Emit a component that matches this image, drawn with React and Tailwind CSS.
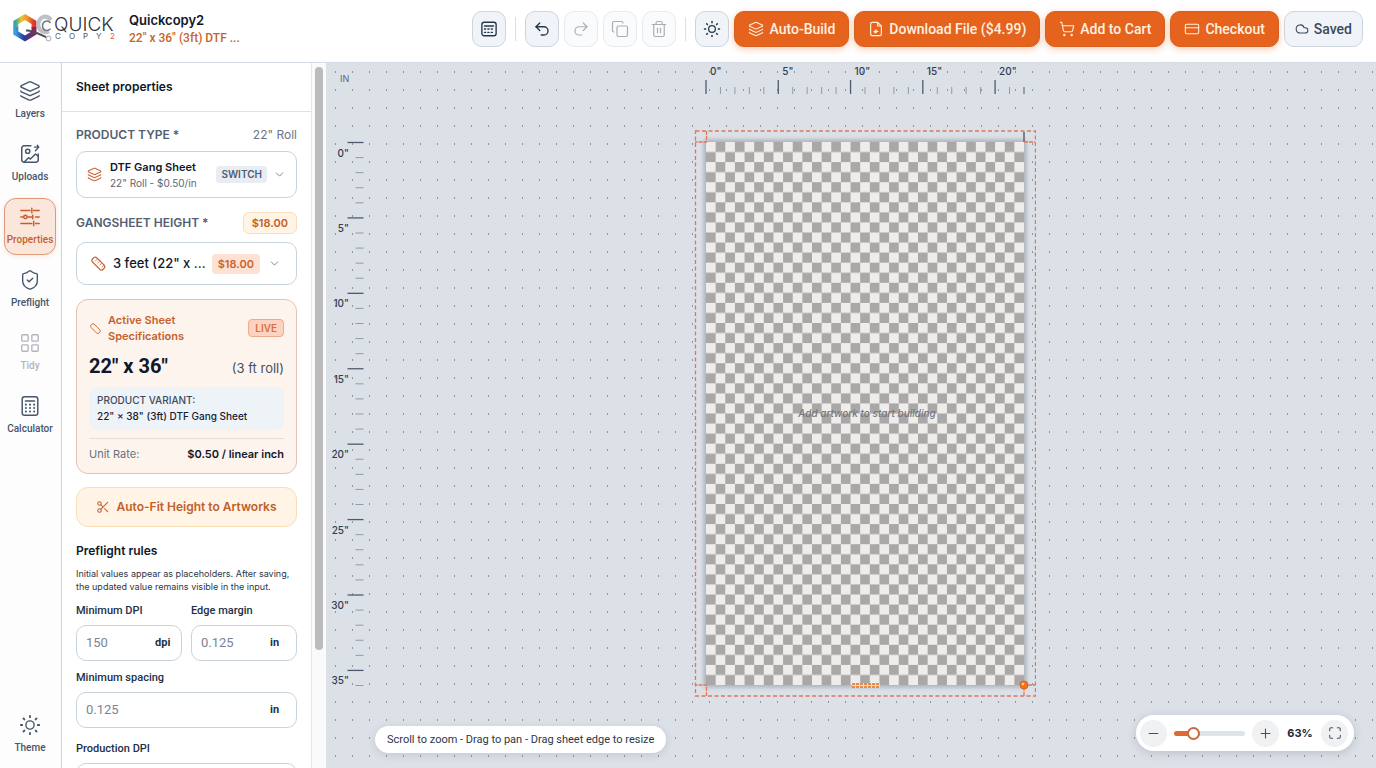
import React, { useState } from "react";
import {
  Layers, ShieldCheck, LayoutGrid, Undo2, Redo2, Copy, Trash2, ShoppingCart,
  CreditCard, Cloud, ChevronDown, Scissors, Minus, Plus, Maximize,
} from "lucide-react";

/* ---------- icons the pack doesn't have ---------- */

const Svg = ({ size = 20, stroke = 1.6, children, className }) => (
  <svg
    width={size}
    height={size}
    viewBox="0 0 24 24"
    fill="none"
    stroke="currentColor"
    strokeWidth={stroke}
    strokeLinecap="round"
    strokeLinejoin="round"
    className={className}
    aria-hidden="true"
  >
    {children}
  </svg>
);

const UploadsIcon = () => (
  <Svg size={22}>
    <path d="M13 3H5.5A2.5 2.5 0 0 0 3 5.5v13A2.5 2.5 0 0 0 5.5 21h13a2.5 2.5 0 0 0 2.5-2.5V12" />
    <circle cx="9.5" cy="9" r="2.3" />
    <path d="M6 20.5 10.5 16l2 1.500L18 12l3 2.500M17 4.500h4.500M20 2.500l1.500 2-3.500 4" />
  </Svg>
);

const SlidersIcon = () => (
  <Svg size={22}>
    <path d="M2 5h10M16 5h6M14 2.500v5M2 12h3M9.500 12H15M18 12h4M15 10v4M2 19h12M18 19h4M16 16.500v5" />
    <circle cx="7" cy="12" r="1.8" />
  </Svg>
);

const CalculatorIcon = () => (
  <Svg size={22}>
    <rect x="3.5" y="2" width="17" height="20" rx="2.5" />
    <path d="M7 6.500h10" />
    <path d="M7.500 10.500h.01M12 10.500h.01M16.500 10.500h.01M7.500 14.200h.01M12 14.200h.01M16.500 14.200h.01M7.500 18h.01M12 18h.01M16.500 18h.01" strokeWidth="2.2" />
  </Svg>
);

const KeypadIcon = () => (
  <Svg size={18} stroke={1.8}>
    <rect x="2.5" y="3" width="19" height="18" rx="3" />
    <path d="M6 8h12" />
    <path d="M6 12h12M6 16.500h12" strokeDasharray="1.5 3" />
  </Svg>
);

const SunIcon = ({ size = 20, stroke = 1.5 }) => (
  <Svg size={size} stroke={stroke}>
    <circle cx="12" cy="12" r="4.5" />
    <path d="M12 2v1.500M12 20.500V22M2 12h1.500M20.500 12H22M4.900 4.900l1 1M18.100 18.100l1 1M4.900 19.100l1-1M18.100 5.900l1-1" strokeWidth="2" />
  </Svg>
);

const FileIcon = () => (
  <Svg size={16} stroke={1.7}>
    <path d="M14.500 2H6a2 2 0 0 0-2 2v16a2 2 0 0 0 2 2h12a2 2 0 0 0 2-2V7.500zM14.500 2v5.500H20" />
    <path d="M9 15.500h6M12 13v4M10 17.500h2.500" />
  </Svg>
);

const RulerIcon = ({ size = 16, ticks = true }) => (
  <Svg size={size} stroke={1.7} className="shrink-0 text-[#cb6a3c]">
    <rect x="1.5" y="8" width="21" height="8.5" rx="3.5" transform="rotate(45 12 12)" />
    {ticks && <path d="m10 6-2 2M13 9l-2 2M16 12l-2 2M19 15l-2 2" strokeWidth="1.3" />}
  </Svg>
);

const Logo = () => (
  <svg width="104" height="32" viewBox="0 0 104 32" role="img" aria-label="Quick Copy 2" className="shrink-0">
    <defs>
      <linearGradient id="hexTop" x1="0" y1="0" x2="1" y2="0">
        <stop offset="0" stopColor="#3aa7a0" />
        <stop offset="0.3" stopColor="#e8c62f" />
        <stop offset="0.65" stopColor="#f0932b" />
        <stop offset="1" stopColor="#d9342b" />
      </linearGradient>
      <linearGradient id="hexBottom" x1="0" y1="0" x2="1" y2="0">
        <stop offset="0" stopColor="#3c9be0" />
        <stop offset="0.45" stopColor="#243c9c" />
        <stop offset="1" stopColor="#8d2462" />
      </linearGradient>
    </defs>
    <path d="M2.800 15V9.500L12 4l9 5.500V15" fill="none" stroke="url(#hexTop)" strokeWidth="5" />
    <path d="M2.800 14v6L12 25.500l9-5.500v-6" fill="none" stroke="url(#hexBottom)" strokeWidth="5" />
    <path d="M38 7C34 1.500 27 3 25.500 10c-1.200 6.500 4.500 11 10.500 8.500" fill="none" stroke="#bfc1c5" strokeWidth="4" />
    <path d="M37.500 10c-2.500-3.500-8-2-8 2.800s5 6 8 3" fill="none" stroke="#74787f" strokeWidth="1.5" />
    <path d="M13 17.500c6-.5 11 2.500 21 7" fill="none" stroke="#4a4d57" strokeWidth="2" />
    <circle cx="35.5" cy="25.5" r="2.3" fill="none" stroke="#b9bcc0" strokeWidth="1.2" />
    <text x="41" y="18" fontSize="19" fontWeight="300" fill="#2d3038">QUICK</text>
    <text x="42" y="26" fontSize="8" fill="#55585f">C</text>
    <text x="56" y="26" fontSize="8" fill="#55585f">O</text>
    <text x="70" y="26" fontSize="8" fill="#55585f">P</text>
    <text x="83" y="26" fontSize="8" fill="#55585f">Y</text>
    <text x="97" y="26" fontSize="8" fill="#e0603c">2</text>
  </svg>
);

/* ---------- header ---------- */

const ToolButton = ({ label, disabled, children }) => (
  <button
    type="button"
    aria-label={label}
    disabled={disabled}
    className="flex h-9 w-[34px] items-center justify-center rounded-[10px] border border-[#ccd5de] bg-[#f0f4f8] text-[#26364a] disabled:border-[#e6ebef] disabled:bg-[#fafbfc] disabled:text-[#a9afb6]"
  >
    {children}
  </button>
);

const ActionButton = ({ icon, children }) => (
  <button
    type="button"
    className="flex h-9 items-center gap-[5px] whitespace-nowrap rounded-[10px] border border-[#d4611f] bg-[#e5631d] px-[13px] font-['Roboto',sans-serif] text-sm font-medium text-[#fff1e2] shadow-[0_2px_7px_rgba(229,99,29,0.35)]"
  >
    {icon}
    {children}
  </button>
);

const Divider = () => <span className="mx-1 h-6 w-px bg-[#d9dfe5]" />;

const Header = () => (
  <header className="flex h-[63px] shrink-0 items-center justify-between border-b border-[#d5dce4] bg-white pb-1 pl-[13px] pr-[13px]">
    <div className="flex items-center gap-3">
      <Logo />
      <div className="leading-[18px]">
        <h1 className="text-[13px] font-semibold text-[#0f172a]">Quickcopy2</h1>
        <p className="font-['Roboto',sans-serif] text-xs leading-[18px] font-medium text-[#c8632c]">22&quot; x 36&quot; (3ft) DTF ...</p>
      </div>
    </div>

    <div className="flex items-center gap-[5px]">
      <ToolButton label="Shortcuts"><KeypadIcon /></ToolButton>
      <Divider />
      <ToolButton label="Undo"><Undo2 size={18} strokeWidth={1.8} /></ToolButton>
      <ToolButton label="Redo" disabled><Redo2 size={18} strokeWidth={1.6} /></ToolButton>
      <ToolButton label="Duplicate" disabled><Copy size={18} strokeWidth={1.6} /></ToolButton>
      <ToolButton label="Delete" disabled><Trash2 size={18} strokeWidth={1.6} /></ToolButton>
      <Divider />
      <ToolButton label="Toggle theme"><SunIcon size={18} stroke={1.7} /></ToolButton>
      <ActionButton icon={<Layers size={16} strokeWidth={1.6} />}>Auto-Build</ActionButton>
      <ActionButton icon={<FileIcon />}>Download File ($4.99)</ActionButton>
      <ActionButton icon={<ShoppingCart size={16} strokeWidth={1.6} />}>Add to Cart</ActionButton>
      <ActionButton icon={<CreditCard size={16} strokeWidth={1.6} />}>Checkout</ActionButton>
      <button
        type="button"
        className="flex h-9 items-center gap-[5px] rounded-[10px] border border-[#ccd5de] bg-[#f0f4f8] px-2.5 font-['Roboto',sans-serif] text-sm font-medium text-[#3c4a5c]"
      >
        <Cloud size={14} strokeWidth={1.8} />
        Saved
      </button>
    </div>
  </header>
);

/* ---------- left rail ---------- */

const railItems = [
  { label: "Layers", icon: <Layers size={22} strokeWidth={1.5} /> },
  { label: "Uploads", icon: <UploadsIcon /> },
  { label: "Properties", icon: <SlidersIcon />, active: true },
  { label: "Preflight", icon: <ShieldCheck size={22} strokeWidth={1.5} /> },
  { label: "Tidy", icon: <LayoutGrid size={22} strokeWidth={1.5} />, disabled: true },
  { label: "Calculator", icon: <CalculatorIcon /> },
];

const RailButton = ({ item }) => (
  <button
    type="button"
    disabled={item.disabled}
    className={
      "flex h-[57px] w-[52px] flex-col items-center justify-center gap-1 rounded-xl border pt-px font-['Roboto',sans-serif] text-[10px] leading-4 font-medium " +
      (item.active
        ? "border-[#dd9a78] bg-[#fbe6dc] text-[#c65f2c] shadow-[0_1px_5px_rgba(229,99,29,0.15)]"
        : "border-transparent text-[#46566a] disabled:text-[#b1b6bd]")
    }
  >
    {item.icon}
    {item.label}
  </button>
);

const Rail = () => (
  <nav className="flex w-[62px] shrink-0 flex-col items-start justify-between border-r border-[#ccd5df] bg-[#fdfdfe] pt-[9px] pb-[5px] pl-1">
    <div className="flex flex-col gap-1.5">
      {railItems.map((item) => (
        <RailButton key={item.label} item={item} />
      ))}
    </div>
    <RailButton item={{ label: "Theme", icon: <SunIcon size={22} /> }} />
  </nav>
);

/* ---------- properties panel ---------- */

const RuleField = ({ id, label, unit, placeholder }) => (
  <div className="min-w-0 font-['Roboto',sans-serif]">
    <label htmlFor={id} className="block text-[11px] leading-4 font-medium text-[#223044]">{label}</label>
    <div className="mt-1.5 flex h-9 items-center rounded-[10px] border border-[#c9d3dc] bg-white pl-[9px]">
      <input
        id={id}
        type="text"
        placeholder={placeholder}
        className="w-full min-w-0 text-[13px] outline-none placeholder:text-[#7b8592]"
      />
      {unit && <span className="w-[26px] shrink-0 text-[11px] font-bold text-[#223044]">{unit}</span>}
    </div>
  </div>
);

const SpecCard = () => (
  <section className="mt-[14px] rounded-xl border border-[#e3c3b3] bg-[#fef4ee] px-3 pt-3 pb-[11px]">
    <div className="flex items-center justify-between">
      <div className="flex items-center gap-1.5 text-[#c4622f]">
        <RulerIcon size={13} ticks={false} />
        <h3 className="w-24 text-[11px] leading-4 font-semibold">Active Sheet Specifications</h3>
      </div>
      <span className="rounded border border-[#efab8b] bg-[#fcd3c0] px-1.5 text-[10px] leading-4 font-semibold text-[#d9703f]">LIVE</span>
    </div>

    <div className="mt-2 flex items-end justify-between">
      <span className="font-['Roboto',sans-serif] text-xl leading-7 font-bold text-[#0f172a]">22&quot; x 36&quot;</span>
      <span className="text-[13px] leading-6 text-[#46505f]">(3 ft roll)</span>
    </div>

    <div className="mt-[7px] rounded-lg bg-[#eef3f8] px-2 pt-[5px] pb-1.5">
      <div className="text-[10px] leading-4 font-medium text-[#3c4a5c]">PRODUCT VARIANT:</div>
      <div className="text-[10px] leading-4 font-medium text-[#172033]">22&quot; × 38&quot; (3ft) DTF Gang Sheet</div>
    </div>

    <div className="mt-2 flex items-center justify-between border-t border-[#e5ddda] pt-[7px] text-[11px] leading-4">
      <span className="text-[#68727f]">Unit Rate:</span>
      <span className="font-semibold text-[#0f172a]">$0.50 / linear inch</span>
    </div>
  </section>
);

const PropertiesPanel = () => (
  <aside className="flex w-[264px] shrink-0 overflow-hidden bg-white">
    <div className="min-w-0 flex-1">
      <h2 className="flex h-[49px] items-center border-b border-[#dbe3ea] px-[14px] text-[12px] font-semibold text-[#0f172a]">
        Sheet properties
      </h2>

      <div className="px-[14px] pt-[14px]">
        <div className="flex items-center justify-between">
          <span id="type-label" className="text-xs leading-[18px] font-semibold text-[#526071]">PRODUCT TYPE *</span>
          <span className="text-xs leading-[18px] text-[#6b7684]">22&quot; Roll</span>
        </div>

        <button
          type="button"
          aria-haspopup="listbox"
          aria-labelledby="type-label"
          className="mt-[7px] flex h-[47px] w-full items-center rounded-[10px] border border-[#c9d3dc] px-2.5 text-left"
        >
          <Layers size={15} strokeWidth={1.8} className="text-[#cd6a38]" />
          <span className="ml-2 flex-1">
            <span className="block text-[11px] leading-4 font-semibold text-[#0f172a]">DTF Gang Sheet</span>
            <span className="block text-[10px] leading-4 text-[#5b6675]">22&quot; Roll - $0.50/in</span>
          </span>
          <span className="rounded bg-[#e8edf3] px-[5px] text-[10px] leading-[17px] font-semibold text-[#4f5d6f]">SWITCH</span>
          <ChevronDown size={13} strokeWidth={1.8} className="ml-1.5 text-[#7a8592]" />
        </button>

        <div className="mt-[14px] flex items-center justify-between">
          <label htmlFor="sheet-height" className="text-xs font-semibold text-[#526071]">GANGSHEET HEIGHT *</label>
          <span className="rounded-md border border-[#f8dfb7] bg-[#fff4e5] px-2 text-[11px] leading-5 font-semibold text-[#c4601f]">$18.00</span>
        </div>

        <div className="mt-2 flex h-[43px] items-center rounded-[10px] border border-[#c9d3dc] pl-[13px] pr-[15px]">
          <RulerIcon size={17} />
          <select
            id="sheet-height"
            className="ml-1.5 min-w-0 flex-1 appearance-none bg-transparent text-[13px] font-medium text-[#0f172a] outline-none"
          >
            <option>3 feet (22&quot; x ...</option>
          </select>
          <span className="rounded bg-[#fde2d3] px-1.5 text-[11px] leading-5 font-semibold text-[#cb642f]">$18.00</span>
          <ChevronDown size={13} strokeWidth={1.8} className="ml-2 text-[#7a8592]" />
        </div>

        <SpecCard />

        <button
          type="button"
          className="mt-[13px] flex h-10 w-full items-center justify-center gap-1.5 rounded-xl border border-[#f9deb4] bg-[#fff4e6] text-xs font-semibold text-[#c0602a]"
        >
          <Scissors size={14} strokeWidth={1.8} />
          Auto-Fit Height to Artworks
        </button>

        <h3 className="mt-4 text-[12px] leading-4 font-semibold text-[#0f172a]">Preflight rules</h3>
        <p className="mt-2 text-[9px] leading-[13px] text-[#2c3747]">
          Initial values appear as placeholders. After saving, the updated value remains visible in the input.
        </p>

        <div className="mt-2.5 grid grid-cols-2 gap-x-[9px] gap-y-[9px]">
          <RuleField id="min-dpi" label="Minimum DPI" unit="dpi" placeholder="150" />
          <RuleField id="edge-margin" label="Edge margin" unit="in" placeholder="0.125" />
          <div className="col-span-2">
            <RuleField id="min-spacing" label="Minimum spacing" unit="in" placeholder="0.125" />
          </div>
          <div className="col-span-2 mt-1">
            <RuleField id="prod-dpi" label="Production DPI" />
          </div>
        </div>
      </div>
    </div>

    {/* scroll track */}
    <div className="flex w-[15px] justify-center border-l border-[#e3e8ed] bg-[#fafafb] pt-1">
      <div className="h-[583px] w-2 rounded-full bg-[#bcbcbc]" />
    </div>
  </aside>
);

/* ---------- canvas ---------- */

const WIDTH_IN = 22;
const HEIGHT_IN = 36;
const SHEET_W = 318;
const SHEET_H = 543;

const TopRuler = () => (
  <svg width="342" height="33" viewBox="0 0 342 33" className="block">
    {Array.from({ length: WIDTH_IN + 1 }, (_, i) => {
      const x = 12 + (i * SHEET_W) / WIDTH_IN;
      const major = i % 5 === 0;
      return (
        <g key={i}>
          <path
            d={`M${x} ${major ? 17 : 24}V31`}
            stroke={major || i === WIDTH_IN ? "#4f5b6c" : "#929baa"}
            strokeWidth={major ? 1.3 : 1}
          />
          {major && <text x={x + 4} y="12" fontSize="10" fontWeight="500" fill="#323e50">{i}&quot;</text>}
        </g>
      );
    })}
  </svg>
);

const LeftRuler = () => (
  <svg width="40" height="640" viewBox="0 0 40 640" className="block shrink-0">
    <text x="14" y="19" fontSize="9" fill="#5c6878">IN</text>
    {Array.from({ length: HEIGHT_IN + 1 }, (_, i) => {
      const y = 79.5 + (i * SHEET_H) / HEIGHT_IN;
      const major = i % 5 === 0;
      return (
        <g key={i}>
          <path
            d={`M${major ? 21.5 : 29.5} ${y}H37.5`}
            stroke={major ? "#4f5b6c" : "#929baa"}
            strokeWidth={major ? 1.3 : 1}
          />
          {major && (
            <text x="23" y={y + 14} fontSize="10" fontWeight="500" textAnchor="end" fill="#323e50">{i}&quot;</text>
          )}
        </g>
      );
    })}
  </svg>
);

const Sheet = () => (
  <svg width="342" height="568" viewBox="0 0 342 568" className="mt-[34px] block">
    <defs>
      <pattern id="checks" width={(SHEET_W / 33) * 2} height={(SHEET_H / 54) * 2} patternUnits="userSpaceOnUse" x="12" y="12">
        <rect width="20" height="21" fill="#eeedeb" />
        <rect x={SHEET_W / 33} width={SHEET_W / 33} height={SHEET_H / 54} fill="#a9a8a6" />
        <rect y={SHEET_H / 54} width={SHEET_W / 33} height={SHEET_H / 54} fill="#a9a8a6" />
      </pattern>
      <filter id="soft" x="-5%" y="-5%" width="110%" height="110%">
        <feGaussianBlur stdDeviation="2" />
      </filter>
    </defs>
    <rect x="10" y="10" width="322" height="547" fill="#8f96a0" opacity="0.7" filter="url(#soft)" />
    <rect x="12" y="12" width={SHEET_W} height={SHEET_H} fill="url(#checks)" />

    <g fill="none" stroke="#e0765c" strokeWidth="1.3">
      <rect x="1.5" y="1" width="340" height="565" strokeDasharray="4 2.5" />
      <path d="M12.500 1v11H1M330 12h11M12.500 566v-11H1M330 566v-11h11" strokeDasharray="4 1" />
    </g>
    <path d="M330 2v10" stroke="#7d7f85" strokeWidth="2" />

    <text x="173" y="287" fontSize="10" fontStyle="italic" fontWeight="500" textAnchor="middle" fill="#77777a">
      Add artwork to start building
    </text>

    {/* resize handles */}
    <rect x="158" y="553" width="28" height="5" rx="1" fill="#ffd9b3" />
    <path d="M158 554h28M158 557h28" stroke="#d9742e" strokeWidth="1.3" strokeDasharray="3 1" />
    <circle cx="330" cy="555" r="4" fill="#f0741f" stroke="#d9621c" />
    <circle cx="329" cy="554" r="1.3" fill="#ffc79b" />
  </svg>
);

const MIN_ZOOM = 10;
const MAX_ZOOM = 250;

const ZoomBar = () => {
  const [zoom, setZoom] = useState(63);
  const fill = ((zoom - MIN_ZOOM) / (MAX_ZOOM - MIN_ZOOM)) * 100;
  const round = "flex size-[27px] items-center justify-center rounded-full bg-[#f0f1f2] text-[#46515f]";

  return (
    <div className="absolute right-[22px] bottom-[17px] flex h-9 items-center rounded-full bg-white pr-1.5 pl-1 shadow-[0_2px_10px_rgba(60,72,90,0.2)]">
      <button type="button" aria-label="Zoom out" className={round} onClick={() => setZoom(Math.max(MIN_ZOOM, zoom - 5))}>
        <Minus size={15} strokeWidth={1.7} />
      </button>
      <input
        type="range"
        aria-label="Zoom"
        min={MIN_ZOOM}
        max={MAX_ZOOM}
        value={zoom}
        onChange={(e) => setZoom(Number(e.target.value))}
        style={{ backgroundImage: `linear-gradient(to right, #dc6a31 ${fill}%, #dfe4e9 ${fill}%)` }}
        className="mx-[7px] h-[5px] w-[71px] appearance-none rounded-full [&::-webkit-slider-thumb]:size-[13px] [&::-webkit-slider-thumb]:appearance-none [&::-webkit-slider-thumb]:rounded-full [&::-webkit-slider-thumb]:border-2 [&::-webkit-slider-thumb]:border-[#c76a3e] [&::-webkit-slider-thumb]:bg-white"
      />
      <button type="button" aria-label="Zoom in" className={round} onClick={() => setZoom(Math.min(MAX_ZOOM, zoom + 5))}>
        <Plus size={15} strokeWidth={1.7} />
      </button>
      <span className="w-[42px] text-center text-[11px] font-bold text-[#1d2939]">{zoom}%</span>
      <button type="button" aria-label="Fit to screen" className={round}>
        <Maximize size={14} strokeWidth={1.8} />
      </button>
    </div>
  );
};

const Canvas = () => (
  <main className="relative flex min-w-0 flex-1 overflow-hidden bg-[#dce0e7] bg-[radial-gradient(circle_at_center,#8c95a2_1px,transparent_1px)] bg-[size:17px_18px] bg-[position:1px_0px]">
    <LeftRuler />
    <div className="flex flex-1 flex-col items-center pr-3">
      <TopRuler />
      <Sheet />
    </div>

    <p className="absolute bottom-[15px] left-[49px] rounded-full bg-white px-3 font-['Roboto',sans-serif] text-[11px] leading-[27px] text-[#2c3747] shadow-[0_2px_8px_rgba(60,72,90,0.15)]">
      Scroll to zoom - Drag to pan - Drag sheet edge to resize
    </p>
    <ZoomBar />
  </main>
);

const App = () => (
  <div className="flex h-screen flex-col overflow-hidden bg-white font-['Inter',sans-serif]">
    <Header />
    <div className="flex min-h-0 flex-1">
      <Rail />
      <PropertiesPanel />
      <Canvas />
    </div>
  </div>
);

export default App;
